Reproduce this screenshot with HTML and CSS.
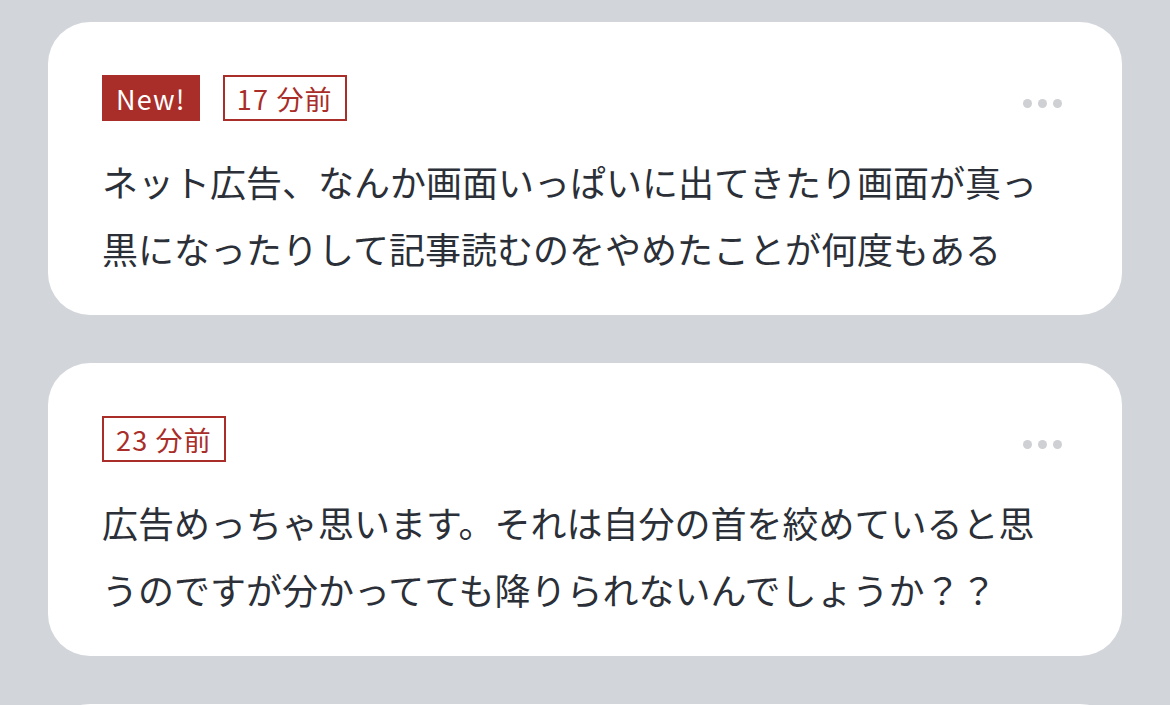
FILE: index.html
```html
<!DOCTYPE html>
<html lang="ja">
<head>
    <meta charset="utf-8">
    <title>コメント</title>
    <link rel="stylesheet" href="styles.css">
</head>
<body>
    <div class="list">
        <div class="card">
            <div class="card-head">
                <div class="tags">
                    <span class="tag tag-new">New!</span>
                    <span class="tag tag-time">17 分前</span>
                </div>
                <div class="more"><i></i><i></i><i></i></div>
            </div>
            <p class="body">ネット広告、なんか画面いっぱいに出てきたり画面が真っ黒になったりして記事読むのをやめたことが何度もある</p>
        </div>
        <div class="card">
            <div class="card-head">
                <div class="tags">
                    <span class="tag tag-time">23 分前</span>
                </div>
                <div class="more"><i></i><i></i><i></i></div>
            </div>
            <p class="body">広告めっちゃ思います。それは自分の首を絞めていると思うのですが分かってても降りられないんでしょうか？？</p>
        </div>
        <div class="card"></div>
    </div>
</body>
</html>
```

FILE: styles.css
```css
body {
    margin: 0;
    background-color: #d2d5da;
    font-family: "Noto Sans CJK JP", "Noto Sans", sans-serif;
    color: #2b2f37;
}
.list {
    display: flex;
    flex-direction: column;
    gap: 48px;
    padding: 22px 48px 0;
}
.card {
    background-color: #fff;
    border-radius: 42px;
    padding: 53px 60px 33px 54px;
    min-height: 100px;
}
.card-head {
    display: flex;
    align-items: center;
    justify-content: space-between;
}
.tags {
    display: flex;
    gap: 23px;
}
.tag {
    box-sizing: border-box;
    height: 46px;
    display: flex;
    align-items: center;
    padding: 0 14px;
    font-size: 27px;
    letter-spacing: 1.2px;
}
.tag-new {
    background-color: #a92d28;
    color: #fff;
}
.tag-time {
    border: 2px solid #a92d28;
    color: #a92d28;
    padding: 0 12px;
}
.more {
    display: flex;
    gap: 6px;
    margin-top: 10px;
}
.more i {
    width: 9px;
    height: 9px;
    border-radius: 50%;
    background-color: #cfd0d4;
}
.body {
    margin: 27px 0 0;
    font-size: 36px;
    line-height: 67px;
}
```
